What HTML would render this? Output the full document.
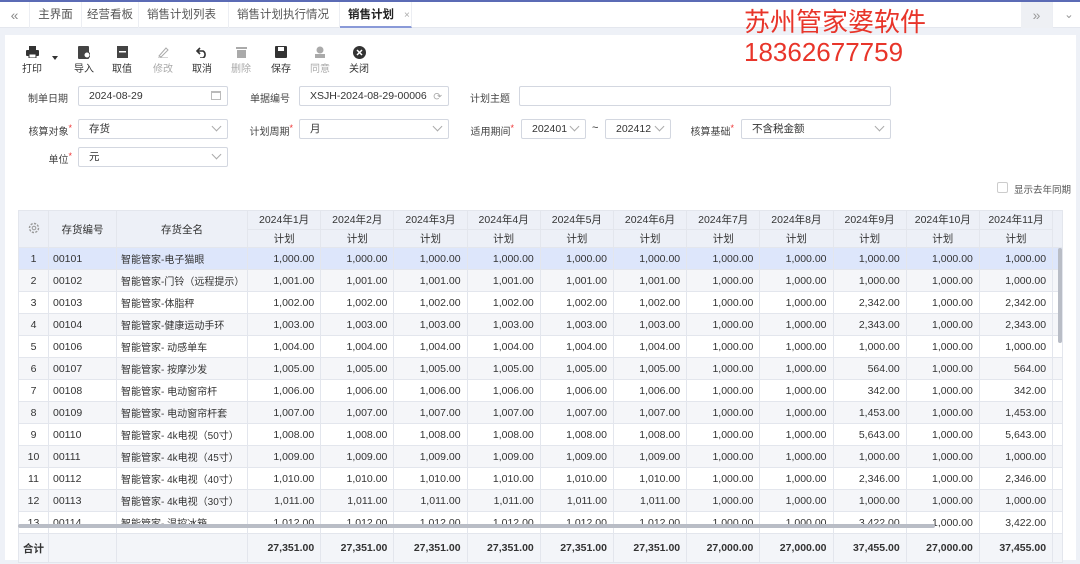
<!DOCTYPE html>
<html><head><meta charset="utf-8">
<style>
*{box-sizing:border-box;margin:0;padding:0}
body{width:1080px;height:564px;overflow:hidden;background:#eef1f7;font-family:"Liberation Sans","Noto Sans CJK SC",sans-serif;font-size:11px;color:#333;position:relative}
.tabs{position:absolute;left:0;top:0;width:1080px;height:28px;background:#fff;border-top:2px solid #5b6bb5;border-bottom:1px solid #e4e7ee}
.tab{position:absolute;top:0;height:26px;line-height:26px;font-size:11.5px;color:#555;border-right:1px solid #eceef3}
.tab .x{color:#aaa;font-size:10px;margin-left:10px}
.panel{position:absolute;left:5px;top:35px;width:1071px;height:525px;background:#fff}
.wm{position:absolute;left:744px;top:7px;color:#e8352a;font-size:26px;line-height:30px;font-family:"Liberation Sans","Noto Sans CJK SC",sans-serif;z-index:5}
.tb{position:absolute;top:45px;width:30px;text-align:center;font-size:10px;color:#333}
.tb .ic{height:14px;margin:0 auto 1px;display:flex;justify-content:center;align-items:center}
.tb.dis{color:#aaa}
.lbl{position:absolute;font-size:10px;color:#444;text-align:right}
.lbl i{color:#e33;font-style:normal;font-size:9px;vertical-align:top}
.inp{position:absolute;height:20px;border:1px solid #d3d7e0;border-radius:2px;background:#fff;font-size:10.5px;line-height:18px;padding-left:10px;color:#333}
.inp .dd{position:absolute;right:7px;width:7px;height:7px;border-right:1px solid #aaa;border-bottom:1px solid #aaa;transform:rotate(45deg);top:3px}
table{position:absolute;left:18px;top:210px;width:1044px;border-collapse:collapse;table-layout:fixed;font-size:10.5px}
td,th{border:1px solid #e3e6ed;height:22px;padding:0 4px;white-space:nowrap;overflow:hidden;font-weight:normal}
th{background:#edf0f7;height:18.5px;color:#333}
td.n{text-align:right;padding-right:6px}
tr.alt td{background:#f5f6f9}
tr.sel td{background:#dde6fb}
tfoot td{background:#f3f5f9;font-weight:bold;height:29px}
</style></head><body>
<div class="tabs">
 <div class="tab" style="left:0;width:30px;text-align:center;color:#888;font-size:14px">«</div>
 <div class="tab" style="left:30px;width:52px;text-align:center">主界面</div>
 <div class="tab" style="left:82px;width:57px;text-align:center">经营看板</div>
 <div class="tab" style="left:139px;width:90px;padding-left:8px">销售计划列表<span class="x">×</span></div>
 <div class="tab" style="left:229px;width:111px;padding-left:8px">销售计划执行情况<span class="x">×</span></div>
 <div class="tab" style="left:340px;width:72px;padding-left:8px;color:#222;font-weight:bold;border-bottom:2px solid #8a9ad8;background:#fff">销售计划<span class="x" style="font-weight:normal">×</span></div>
 <div class="tab" style="left:1021px;width:32px;background:#eef0f4;text-align:center;color:#999;font-size:14px">»</div>
 <div class="tab" style="left:1058px;width:22px;text-align:center;color:#999;border:none">⌄</div>
</div>
<div class="wm">苏州管家婆软件<br>18362677759</div>
<div class="panel"></div>

<div class="tb" style="left:17px"><div class="ic"><svg width="13" height="12"><rect x="3" y="0" width="7" height="4" fill="#333"/><rect x="0" y="4" width="13" height="6" rx="1" fill="#333"/><rect x="3" y="8" width="7" height="4" fill="#fff" stroke="#333"/></svg></div>打印</div>
<div style="position:absolute;left:52px;top:56px;width:0;height:0;border-left:3px solid transparent;border-right:3px solid transparent;border-top:4px solid #333"></div>
<div class="tb" style="left:69px"><div class="ic"><svg width="12" height="13"><rect x="0" y="0" width="11" height="13" rx="1" fill="#444"/><circle cx="9" cy="9" r="3" fill="#fff" stroke="#444"/></svg></div>导入</div>
<div class="tb" style="left:107px"><div class="ic"><svg width="11" height="12"><rect x="0" y="0" width="11" height="12" fill="#444"/><rect x="2" y="5" width="7" height="1.5" fill="#fff"/></svg></div>取值</div>
<div class="tb dis" style="left:148px"><div class="ic"><svg width="12" height="12"><path d="M2 10 L9 2 L11 4 L4 11 Z" fill="none" stroke="#aaa"/><path d="M1 12 H11" stroke="#aaa"/></svg></div>修改</div>
<div class="tb" style="left:187px"><div class="ic"><svg width="12" height="12"><path d="M4 2 L1 5 L4 8" fill="none" stroke="#333" stroke-width="1.6"/><path d="M1 5 H7 A4 4 0 0 1 7 12 H4" fill="none" stroke="#333" stroke-width="1.6"/></svg></div>取消</div>
<div class="tb dis" style="left:226px"><div class="ic"><svg width="11" height="12"><rect x="0" y="1" width="11" height="2" fill="#aaa"/><rect x="1" y="4" width="9" height="8" fill="#aaa"/></svg></div>删除</div>
<div class="tb" style="left:266px"><div class="ic"><svg width="12" height="12"><rect x="0" y="0" width="12" height="12" rx="1" fill="#333"/><rect x="3" y="1" width="6" height="4" fill="#fff"/></svg></div>保存</div>
<div class="tb dis" style="left:305px"><div class="ic"><svg width="12" height="12"><circle cx="6" cy="4" r="3.5" fill="#aaa"/><rect x="1" y="8" width="10" height="4" fill="#aaa"/></svg></div>同意</div>
<div class="tb" style="left:344px"><div class="ic"><svg width="13" height="13"><circle cx="6.5" cy="6.5" r="6.5" fill="#333"/><path d="M4 4 L9 9 M9 4 L4 9" stroke="#fff" stroke-width="1.5"/></svg></div>关闭</div>

<div class="lbl" style="left:16px;top:90px;width:52px">制单日期</div>
<div class="inp" style="left:78px;top:86px;width:150px">2024-08-29<span style="position:absolute;right:6px;top:4px;width:10px;height:9px;border:1px solid #bbb;border-top-width:2px"></span></div>
<div class="lbl" style="left:238px;top:90px;width:52px">单据编号</div>
<div class="inp" style="left:299px;top:86px;width:150px">XSJH-2024-08-29-00006<span style="position:absolute;right:6px;top:1px;color:#aaa">⟳</span></div>
<div class="lbl" style="left:458px;top:90px;width:52px">计划主题</div>
<div class="inp" style="left:519px;top:86px;width:372px"></div>

<div class="lbl" style="left:12px;top:123px;width:60px">核算对象<i>*</i></div>
<div class="inp" style="left:78px;top:119px;width:150px">存货<span class="dd"></span></div>
<div class="lbl" style="left:233px;top:123px;width:60px">计划周期<i>*</i></div>
<div class="inp" style="left:299px;top:119px;width:150px">月<span class="dd"></span></div>
<div class="lbl" style="left:454px;top:123px;width:60px">适用期间<i>*</i></div>
<div class="inp" style="left:521px;top:119px;width:65px">202401<span class="dd"></span></div>
<div style="position:absolute;left:592px;top:122px;font-size:11px">~</div>
<div class="inp" style="left:605px;top:119px;width:66px">202412<span class="dd"></span></div>
<div class="lbl" style="left:674px;top:123px;width:60px">核算基础<i>*</i></div>
<div class="inp" style="left:741px;top:119px;width:150px">不含税金额<span class="dd"></span></div>

<div class="lbl" style="left:28px;top:151px;width:44px">单位<i>*</i></div>
<div class="inp" style="left:78px;top:147px;width:150px">元<span class="dd"></span></div>

<div style="position:absolute;left:997px;top:182px;width:11px;height:11px;border:1px solid #ccc;border-radius:2px"></div>
<div style="position:absolute;left:1014px;top:182px;font-size:9.5px;color:#555">显示去年同期</div>

<table>
<colgroup><col style="width:30px"><col style="width:68px"><col style="width:131px"><col span="11" style="width:73.2px"><col style="width:10px"></colgroup>
<thead>
<tr><th rowspan="2"><svg width="12" height="12" viewBox="0 0 12 12"><circle cx="6" cy="6" r="4.5" fill="none" stroke="#999" stroke-width="1.4" stroke-dasharray="2.2 1.3"/><circle cx="6" cy="6" r="1.8" fill="none" stroke="#999"/></svg></th><th rowspan="2">存货编号</th><th rowspan="2">存货全名</th>
<th>2024年1月</th><th>2024年2月</th><th>2024年3月</th><th>2024年4月</th><th>2024年5月</th><th>2024年6月</th><th>2024年7月</th><th>2024年8月</th><th>2024年9月</th><th>2024年10月</th><th>2024年11月</th><th rowspan="2"></th></tr>
<tr><th>计划</th><th>计划</th><th>计划</th><th>计划</th><th>计划</th><th>计划</th><th>计划</th><th>计划</th><th>计划</th><th>计划</th><th>计划</th></tr>
</thead>
<tbody id="tb"></tbody>
<tfoot><tr><td>合计</td><td></td><td></td><td class="n">27,351.00</td><td class="n">27,351.00</td><td class="n">27,351.00</td><td class="n">27,351.00</td><td class="n">27,351.00</td><td class="n">27,351.00</td><td class="n">27,000.00</td><td class="n">27,000.00</td><td class="n">37,455.00</td><td class="n">27,000.00</td><td class="n">37,455.00</td><td></td></tr></tfoot>
</table>
<div style="position:absolute;left:18px;top:524px;width:917px;height:4px;background:#b9bdc6;border-radius:2px"></div>
<div style="position:absolute;left:1058px;top:248px;width:4px;height:95px;background:#b9bdc6;border-radius:2px"></div>
<script>
var d=[["00101","智能管家-电子猫眼","1,000.00"],["00102","智能管家-门铃（远程提示）","1,000.00"],["00103","智能管家-体脂秤","2,342.00"],["00104","智能管家-健康运动手环","2,343.00"],["00106","智能管家- 动感单车","1,000.00"],["00107","智能管家- 按摩沙发","564.00"],["00108","智能管家- 电动窗帘杆","342.00"],["00109","智能管家- 电动窗帘杆套","1,453.00"],["00110","智能管家- 4k电视（50寸）","5,643.00"],["00111","智能管家- 4k电视（45寸）","1,000.00"],["00112","智能管家- 4k电视（40寸）","2,346.00"],["00113","智能管家- 4k电视（30寸）","1,000.00"],["00114","智能管家- 温控冰箱","3,422.00"]];
var h="";d.forEach(function(r,i){var v="1,0"+(i<10?"0"+i:i)+".00";var c=i==0?"sel":(i%2?"alt":"");
h+='<tr class="'+c+'"><td style="text-align:center">'+(i+1)+'</td><td>'+r[0]+'</td><td style="font-size:10px">'+r[1]+'</td>';
for(var k=0;k<6;k++)h+='<td class="n">'+v+'</td>';
h+='<td class="n">1,000.00</td><td class="n">1,000.00</td><td class="n">'+r[2]+'</td><td class="n">1,000.00</td><td class="n">'+r[2]+'</td><td></td></tr>';});
document.getElementById("tb").innerHTML=h;
</script>
</body></html>
